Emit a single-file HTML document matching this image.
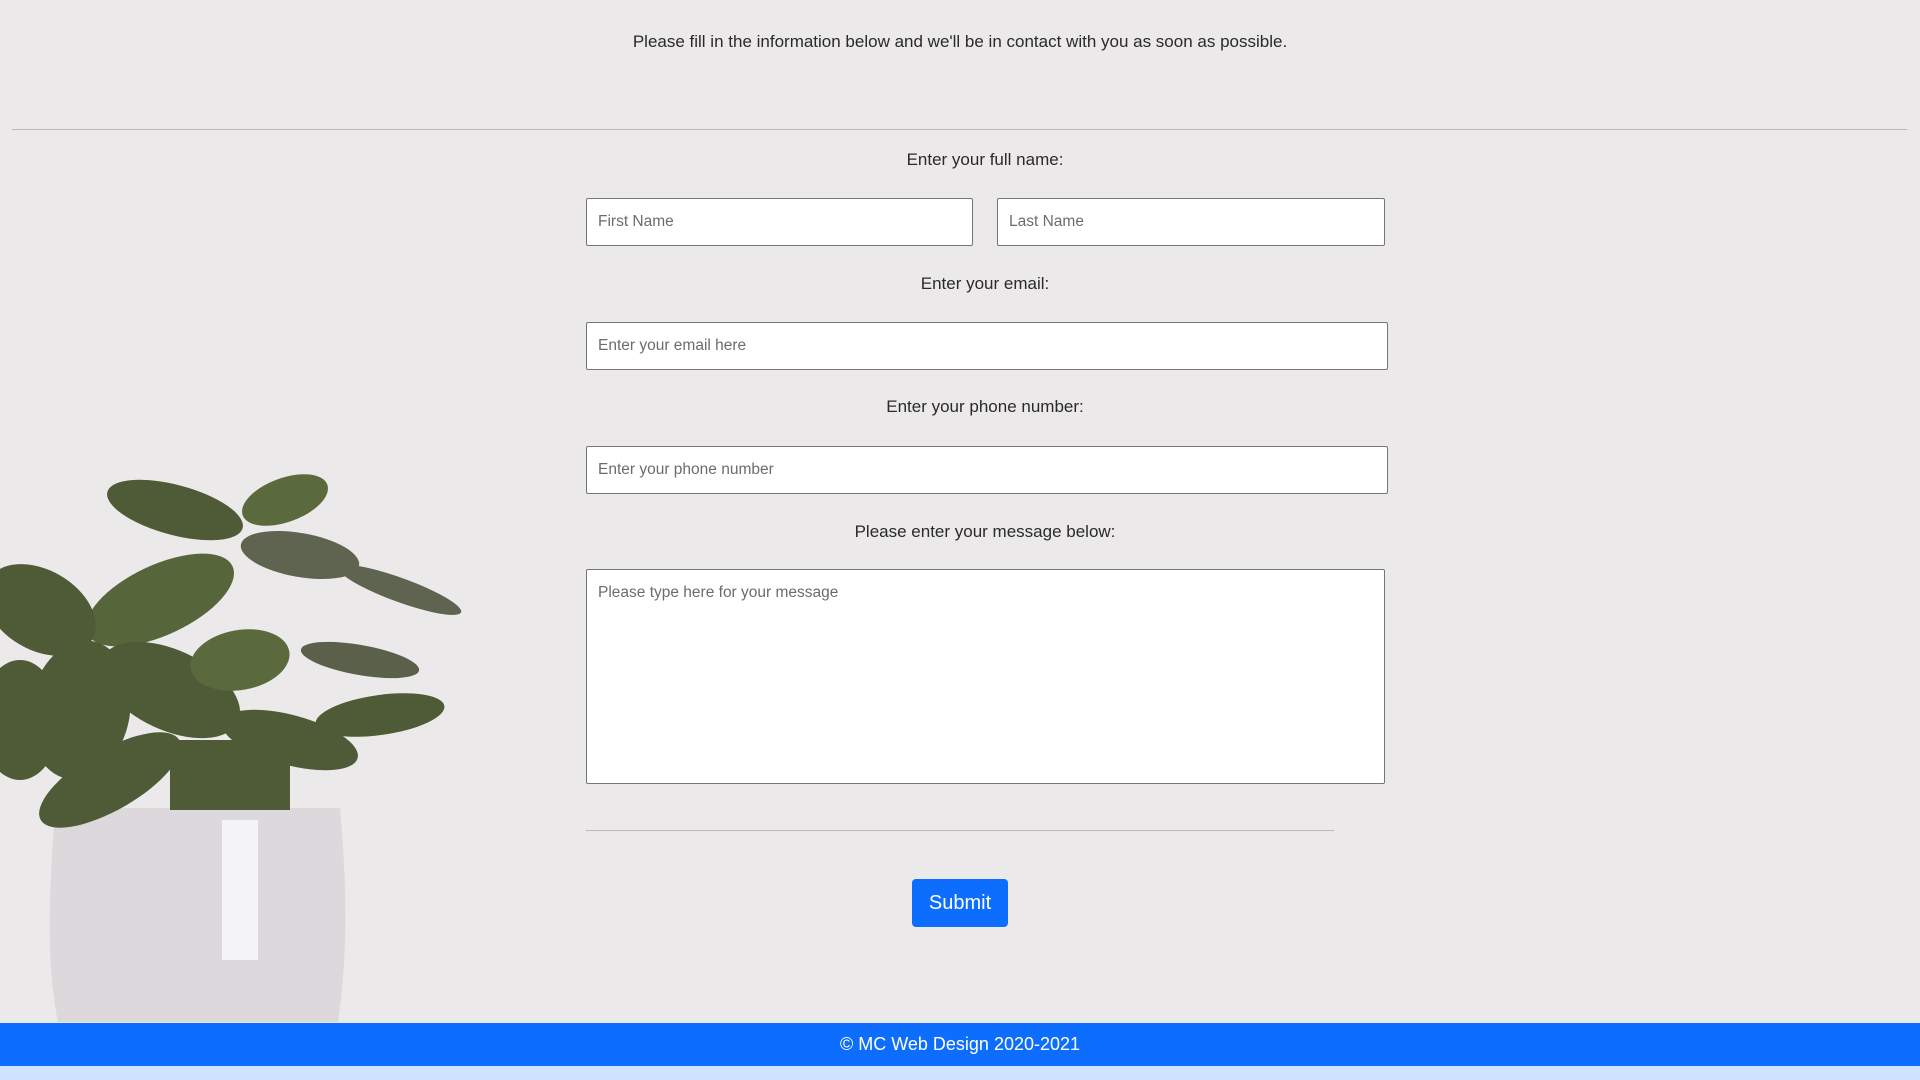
<!DOCTYPE html>
<html><head><meta charset="utf-8"><style>
*{box-sizing:border-box;margin:0;padding:0}
body{width:1920px;height:1080px;background:#ebe9e9;font-family:"Liberation Sans",sans-serif;position:relative;overflow:hidden;color:#222}
.t{position:absolute;left:0;width:1920px;text-align:center;font-size:17px;color:#2a2a2a}
.in{position:absolute;background:#fff;border:1px solid #767676;border-radius:2px;font-size:15.5px;color:#6c6c6c;padding-left:11px;display:flex;align-items:center}
.hr{position:absolute;height:1px;background:#b8b8b8}
</style></head><body>
<svg style="position:absolute;left:0;top:460px" width="480" height="565" viewBox="0 0 480 565">
<path d="M55 348 C50 420 45 500 58 562 L338 562 C350 480 345 410 340 348 Z" fill="#dcd8db"/>
<rect x="222" y="360" width="36" height="140" fill="#f4f4f6"/>
<g fill="#4f5a36">
<ellipse cx="175" cy="50" rx="70" ry="25" transform="rotate(15 175 50)"/>
<ellipse cx="285" cy="40" rx="45" ry="22" transform="rotate(-20 285 40)" fill="#5a6a3c"/>
<ellipse cx="300" cy="95" rx="60" ry="22" transform="rotate(10 300 95)" fill="#5e6450"/>
<ellipse cx="400" cy="130" rx="65" ry="12" transform="rotate(20 400 130)" fill="#5e6450"/>
<ellipse cx="160" cy="140" rx="80" ry="35" transform="rotate(-25 160 140)" fill="#56653a"/>
<ellipse cx="40" cy="150" rx="60" ry="40" transform="rotate(30 40 150)"/>
<ellipse cx="80" cy="250" rx="50" ry="70" transform="rotate(10 80 250)"/>
<ellipse cx="170" cy="230" rx="75" ry="40" transform="rotate(25 170 230)"/>
<ellipse cx="240" cy="200" rx="50" ry="30" transform="rotate(-10 240 200)" fill="#5a6a3c"/>
<ellipse cx="360" cy="200" rx="60" ry="15" transform="rotate(10 360 200)" fill="#5a604a"/>
<ellipse cx="380" cy="255" rx="65" ry="20" transform="rotate(-8 380 255)"/>
<ellipse cx="290" cy="280" rx="70" ry="25" transform="rotate(15 290 280)"/>
<ellipse cx="110" cy="320" rx="80" ry="30" transform="rotate(-30 110 320)"/>
<ellipse cx="20" cy="260" rx="40" ry="60"/>
<rect x="170" y="280" width="120" height="70"/>
</g>
</svg>
<div class="t" style="top:32px">Please fill in the information below and we'll be in contact with you as soon as possible.</div>
<div class="hr" style="left:12px;width:1895px;top:129px"></div>
<div class="t" style="top:150px;left:25px">Enter your full name:</div>
<div class="in" style="left:586px;top:198px;width:387px;height:48px">First Name</div>
<div class="in" style="left:997px;top:198px;width:388px;height:48px">Last Name</div>
<div class="t" style="top:274px;left:25px">Enter your email:</div>
<div class="in" style="left:586px;top:322px;width:802px;height:48px">Enter your email here</div>
<div class="t" style="top:397px;left:25px">Enter your phone number:</div>
<div class="in" style="left:586px;top:446px;width:802px;height:48px">Enter your phone number</div>
<div class="t" style="top:522px;left:25px">Please enter your message below:</div>
<div class="in" style="left:586px;top:569px;width:799px;height:215px;align-items:flex-start;padding-top:14px">Please type here for your message</div>
<div class="hr" style="left:586px;width:748px;top:830px"></div>
<div style="position:absolute;left:912px;top:879px;width:96px;height:48px;background:#0d6efd;border-radius:4px;color:#fff;font-size:20px;display:flex;align-items:center;justify-content:center">Submit</div>
<div style="position:absolute;left:0;top:1023px;width:1920px;height:43px;background:#0d6efd;color:#fff;font-size:18px;display:flex;align-items:center;justify-content:center">© MC Web Design 2020-2021</div>
<div style="position:absolute;left:0;top:1066px;width:1920px;height:14px;background:#cfe2ff"></div>
</body></html>
